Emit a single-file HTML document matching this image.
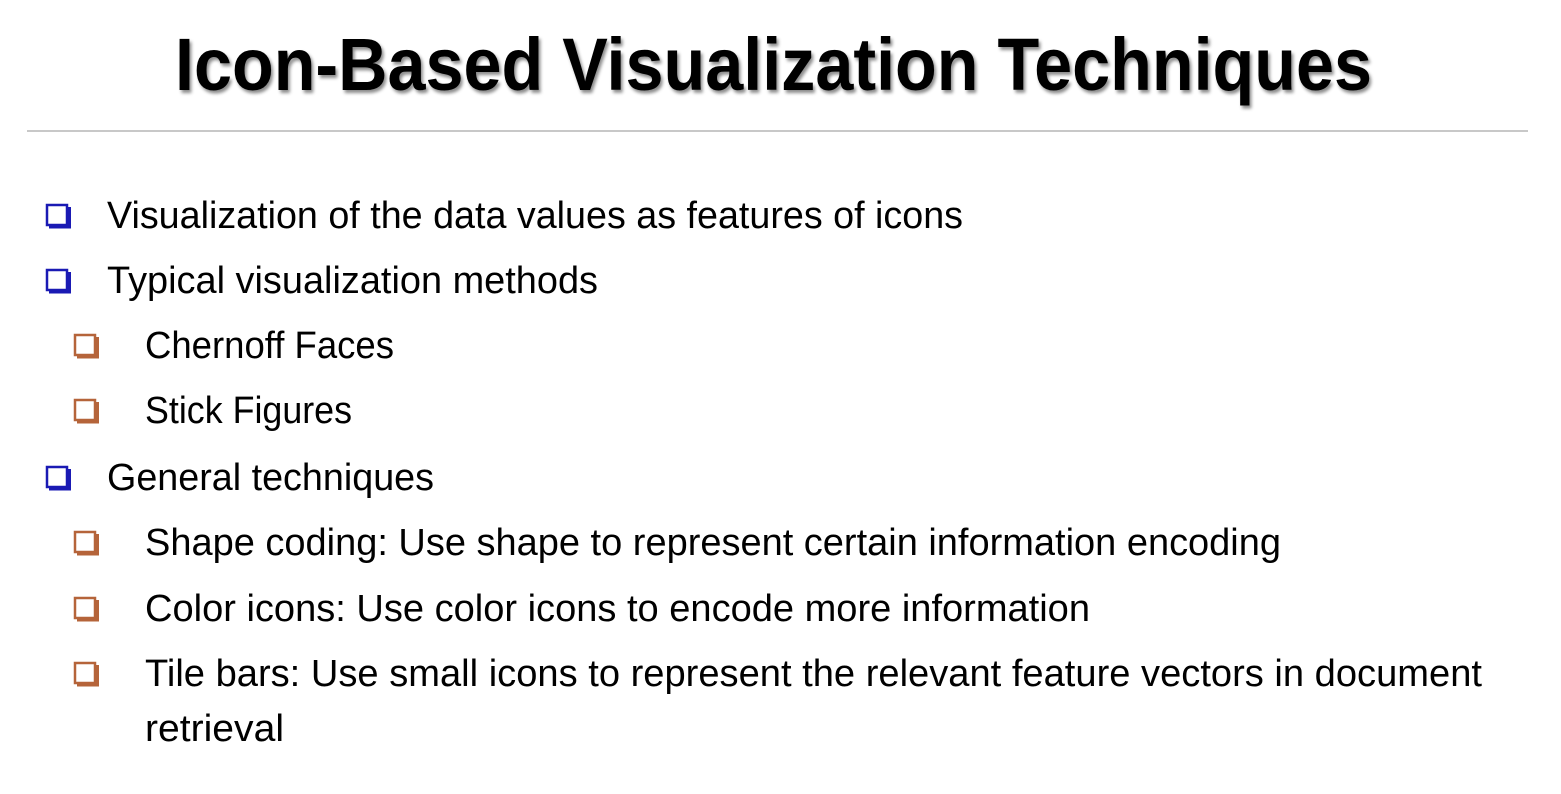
<!DOCTYPE html>
<html><head><style>
html,body{margin:0;padding:0;background:#fff;width:1561px;height:794px;overflow:hidden}
</style></head><body>
<svg width="1561" height="794" xmlns="http://www.w3.org/2000/svg" style="display:block">
<defs>
<filter id="sh" x="-5%" y="-20%" width="110%" height="140%"><feDropShadow dx="2" dy="3" stdDeviation="1.5" flood-color="#000" flood-opacity="0.45"/></filter>
<g id="bb"><rect x="1" y="1" width="20" height="20" fill="#fff" stroke="currentColor" stroke-width="2.5"/><path d="M3 22.5 H23 V3" fill="none" stroke="currentColor" stroke-width="4"/></g>
</defs>
<text x="175" y="90" font-family="Liberation Sans, sans-serif" font-weight="bold" font-size="74" textLength="1197" lengthAdjust="spacingAndGlyphs" filter="url(#sh)" fill="#000">Icon-Based Visualization Techniques</text>
<rect x="27" y="130" width="1501" height="2" fill="#c8c8c8"/>
<g font-family="Liberation Sans, sans-serif" font-size="38" fill="#000" lengthAdjust="spacingAndGlyphs">
<text x="107" y="228" textLength="856" lengthAdjust="spacingAndGlyphs">Visualization of the data values as features of icons</text>
<text x="107" y="293" textLength="491" lengthAdjust="spacingAndGlyphs">Typical visualization methods</text>
<text x="145" y="358" textLength="249" lengthAdjust="spacingAndGlyphs">Chernoff Faces</text>
<text x="145" y="423" textLength="207" lengthAdjust="spacingAndGlyphs">Stick Figures</text>
<text x="107" y="490" textLength="327" lengthAdjust="spacingAndGlyphs">General techniques</text>
<text x="145" y="555" textLength="1136" lengthAdjust="spacingAndGlyphs">Shape coding: Use shape to represent certain information encoding</text>
<text x="145" y="621" textLength="945" lengthAdjust="spacingAndGlyphs">Color icons: Use color icons to encode more information</text>
<text x="145" y="686" textLength="1337" lengthAdjust="spacingAndGlyphs">Tile bars: Use small icons to represent the relevant feature vectors in document</text>
<text x="145" y="741" textLength="139" lengthAdjust="spacingAndGlyphs">retrieval</text>
</g>
<g color="#1a1ab4">
<use href="#bb" x="46" y="204"/>
<use href="#bb" x="46" y="269"/>
<use href="#bb" x="46" y="466"/>
</g>
<g color="#b5643a">
<use href="#bb" x="74" y="334"/>
<use href="#bb" x="74" y="399"/>
<use href="#bb" x="74" y="531"/>
<use href="#bb" x="74" y="597"/>
<use href="#bb" x="74" y="662"/>
</g>
</svg>
</body></html>
